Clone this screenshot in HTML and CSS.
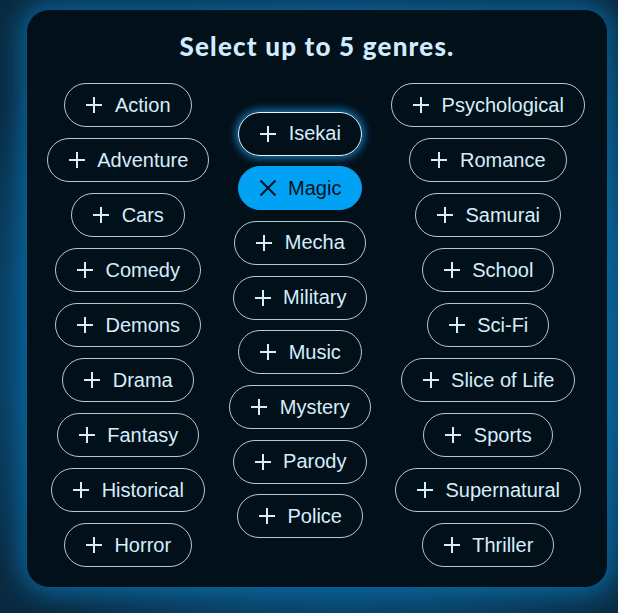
FILE: index.html
```html
<!DOCTYPE html>
<html lang="en">
<head>
<meta charset="utf-8">
<title>Select genres</title>
<link rel="stylesheet" href="styles.css">
</head>
<body>
<div class="stage">
  <section class="card">
    <h1 class="title">Select up to 5 genres.</h1>
    <div class="columns">
      <div class="col">
        <button class="chip"><svg class="ico" viewBox="0 0 18 18"><path d="M9 1v16M1 9h16"/></svg><span>Action</span></button>
        <button class="chip"><svg class="ico" viewBox="0 0 18 18"><path d="M9 1v16M1 9h16"/></svg><span>Adventure</span></button>
        <button class="chip"><svg class="ico" viewBox="0 0 18 18"><path d="M9 1v16M1 9h16"/></svg><span>Cars</span></button>
        <button class="chip"><svg class="ico" viewBox="0 0 18 18"><path d="M9 1v16M1 9h16"/></svg><span>Comedy</span></button>
        <button class="chip"><svg class="ico" viewBox="0 0 18 18"><path d="M9 1v16M1 9h16"/></svg><span>Demons</span></button>
        <button class="chip"><svg class="ico" viewBox="0 0 18 18"><path d="M9 1v16M1 9h16"/></svg><span>Drama</span></button>
        <button class="chip"><svg class="ico" viewBox="0 0 18 18"><path d="M9 1v16M1 9h16"/></svg><span>Fantasy</span></button>
        <button class="chip"><svg class="ico" viewBox="0 0 18 18"><path d="M9 1v16M1 9h16"/></svg><span>Historical</span></button>
        <button class="chip"><svg class="ico" viewBox="0 0 18 18"><path d="M9 1v16M1 9h16"/></svg><span>Horror</span></button>
      </div>
      <div class="col col-mid">
        <button class="chip chip-focus"><svg class="ico" viewBox="0 0 18 18"><path d="M9 1v16M1 9h16"/></svg><span>Isekai</span></button>
        <button class="chip chip-on"><svg class="ico" viewBox="0 0 18 18"><path d="M1.5 1.5l15 15M16.5 1.5l-15 15"/></svg><span>Magic</span></button>
        <button class="chip"><svg class="ico" viewBox="0 0 18 18"><path d="M9 1v16M1 9h16"/></svg><span>Mecha</span></button>
        <button class="chip"><svg class="ico" viewBox="0 0 18 18"><path d="M9 1v16M1 9h16"/></svg><span>Military</span></button>
        <button class="chip"><svg class="ico" viewBox="0 0 18 18"><path d="M9 1v16M1 9h16"/></svg><span>Music</span></button>
        <button class="chip"><svg class="ico" viewBox="0 0 18 18"><path d="M9 1v16M1 9h16"/></svg><span>Mystery</span></button>
        <button class="chip"><svg class="ico" viewBox="0 0 18 18"><path d="M9 1v16M1 9h16"/></svg><span>Parody</span></button>
        <button class="chip"><svg class="ico" viewBox="0 0 18 18"><path d="M9 1v16M1 9h16"/></svg><span>Police</span></button>
      </div>
      <div class="col">
        <button class="chip"><svg class="ico" viewBox="0 0 18 18"><path d="M9 1v16M1 9h16"/></svg><span>Psychological</span></button>
        <button class="chip"><svg class="ico" viewBox="0 0 18 18"><path d="M9 1v16M1 9h16"/></svg><span>Romance</span></button>
        <button class="chip"><svg class="ico" viewBox="0 0 18 18"><path d="M9 1v16M1 9h16"/></svg><span>Samurai</span></button>
        <button class="chip"><svg class="ico" viewBox="0 0 18 18"><path d="M9 1v16M1 9h16"/></svg><span>School</span></button>
        <button class="chip"><svg class="ico" viewBox="0 0 18 18"><path d="M9 1v16M1 9h16"/></svg><span>Sci-Fi</span></button>
        <button class="chip"><svg class="ico" viewBox="0 0 18 18"><path d="M9 1v16M1 9h16"/></svg><span>Slice of Life</span></button>
        <button class="chip"><svg class="ico" viewBox="0 0 18 18"><path d="M9 1v16M1 9h16"/></svg><span>Sports</span></button>
        <button class="chip"><svg class="ico" viewBox="0 0 18 18"><path d="M9 1v16M1 9h16"/></svg><span>Supernatural</span></button>
        <button class="chip"><svg class="ico" viewBox="0 0 18 18"><path d="M9 1v16M1 9h16"/></svg><span>Thriller</span></button>
      </div>
    </div>
  </section>
</div>
</body>
</html>
```

FILE: styles.css
```css
html, body {
  margin: 0;
  padding: 0;
  height: 100%;
}

body {
  background:
    radial-gradient(ellipse 70% 60% at 55% 55%, #0b6fa8 0%, #0a5686 55%, #0a2a40 100%);
  overflow: hidden;
}

.stage {
  padding: 10px 0 0 27px;
}

.card {
  width: 580px;
  box-sizing: border-box;
  background: #02101a;
  border-radius: 22px;
  padding: 20px 20px 20px 20px;
  box-shadow: 0 0 26px 6px rgba(8, 110, 170, 0.85);
}

.title {
  margin: 0 0 21px;
  height: 32px;
  line-height: 32px;
  text-align: center;
  font-family: Lato, "Noto Sans", sans-serif;
  font-weight: 900;
  font-size: 26px;
  color: #d2ecff;
  letter-spacing: 1.2px;
}

.columns {
  display: grid;
  grid-template-columns: 162px 142px 194px;
  column-gap: 20px;
}

.col {
  display: flex;
  flex-direction: column;
  align-items: center;
  justify-content: center;
  gap: 11px;
}

.col-mid {
  gap: 10.7px;
}

.chip {
  display: inline-flex;
  align-items: center;
  gap: 11.5px;
  height: 44px;
  box-sizing: border-box;
  padding: 0 20px;
  border: 1px solid #b9c6cf;
  border-radius: 22px;
  background: transparent;
  color: #d6eefc;
  font-family: "Liberation Sans", Arial, sans-serif;
  font-size: 20px;
  white-space: nowrap;
  cursor: pointer;
}

.ico {
  width: 18px;
  height: 18px;
  flex: none;
  fill: none;
  stroke: currentColor;
  stroke-width: 2;
}

.chip-focus {
  border-color: #e6f4ff;
  box-shadow: 0 0 8px 2px rgba(30, 165, 245, 0.75);
}

.chip-on {
  background: #01a2f4;
  border-color: #01a2f4;
  color: #04121c;
}
```
